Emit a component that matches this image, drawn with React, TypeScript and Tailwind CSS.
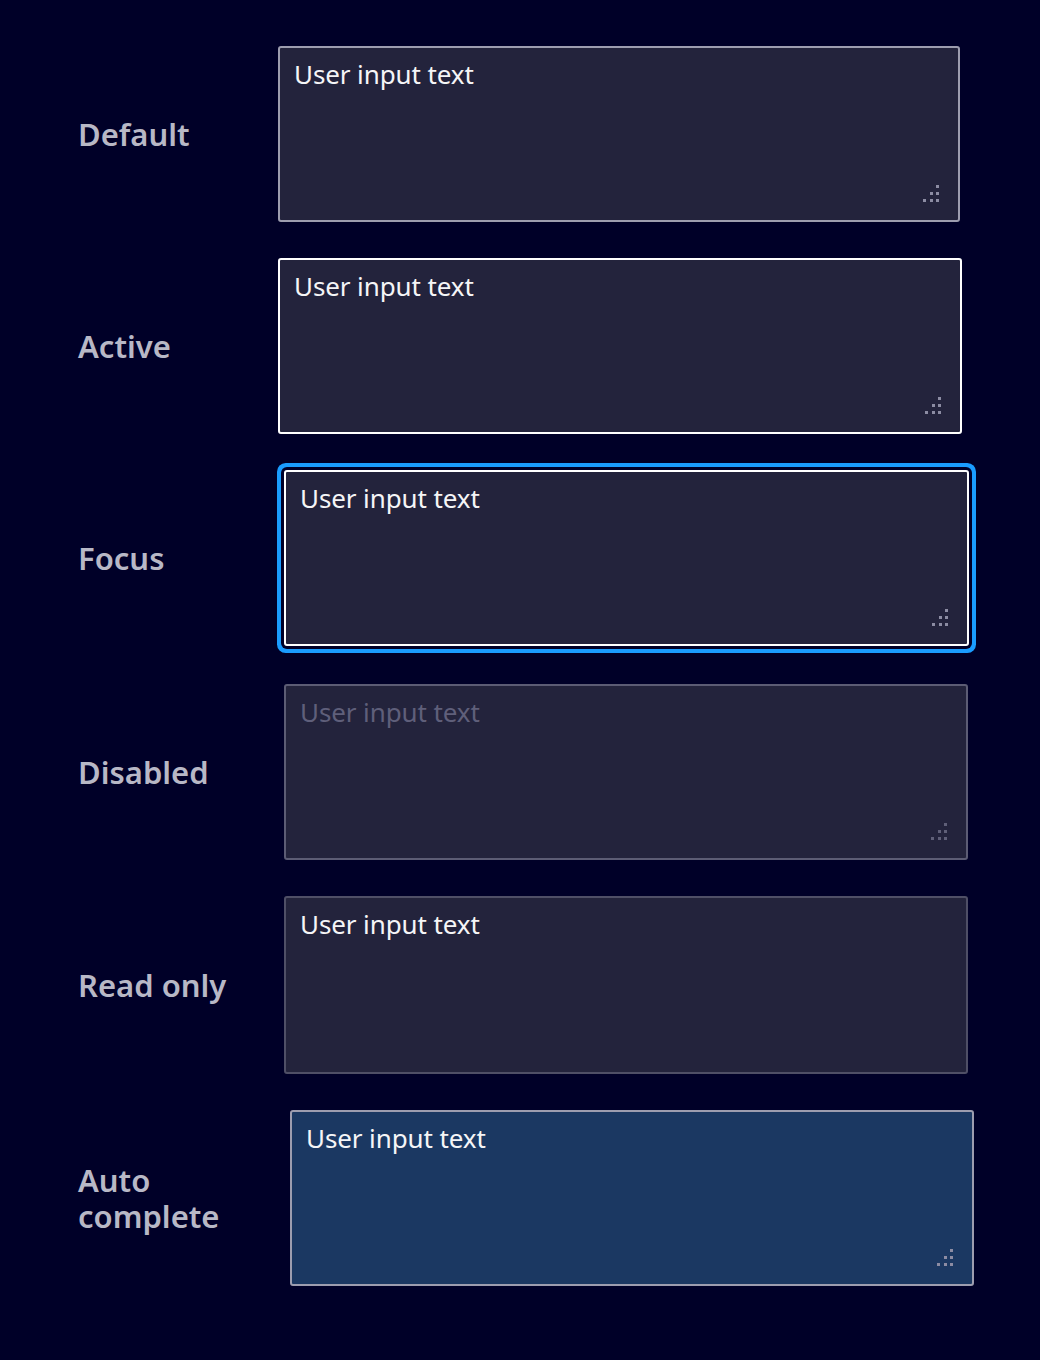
import React from 'react'

type Variant = 'default' | 'active' | 'focus' | 'disabled' | 'readonly' | 'autocomplete'

const rows: { label: string; variant: Variant; offset: string; top: string }[] = [
  { label: 'Default', variant: 'default', offset: 'ml-0', top: 'mt-0' },
  { label: 'Active', variant: 'active', offset: 'ml-0', top: 'mt-[36px]' },
  { label: 'Focus', variant: 'focus', offset: 'ml-[6px]', top: 'mt-[36px]' },
  { label: 'Disabled', variant: 'disabled', offset: 'ml-[6px]', top: 'mt-[38px]' },
  { label: 'Read only', variant: 'readonly', offset: 'ml-[6px]', top: 'mt-[36px]' },
  { label: 'Auto complete', variant: 'autocomplete', offset: 'ml-[12px]', top: 'mt-[36px]' },
]

const boxStyles: Record<Variant, string> = {
  default: 'w-[682px] h-[176px] bg-[#23233c] border-2 border-[#9d9daf] text-[#f5f5f7]',
  active: 'w-[684px] h-[176px] bg-[#23233c] border-2 border-white text-[#f5f5f7]',
  focus:
    'w-[685px] h-[176px] bg-[#23233c] border-2 border-white text-[#f5f5f7] shadow-[0_0_0_3px_#000028,0_0_0_7px_#1a9cff]',
  disabled: 'w-[684px] h-[176px] bg-[#23233c] border-2 border-[#5c5c74] text-[#5f5f7a]',
  readonly: 'w-[684px] h-[178px] bg-[#23233c] border-2 border-[#4f4f66] text-[#f5f5f7]',
  autocomplete: 'w-[684px] h-[176px] bg-[#1b3862] border-2 border-[#9d9daf] text-[#f5f5f7]',
}

function ResizeGrip({ dim }: { dim?: boolean }) {
  const fill = dim ? '#5f5f78' : '#8c8ca3'
  const dots = [
    [13, 0],
    [7, 7],
    [13, 7],
    [0, 14],
    [7, 14],
    [13, 14],
  ]
  return (
    <svg width="16" height="17" viewBox="0 0 16 17" className="absolute right-[19px] bottom-[18px]">
      {dots.map(([x, y], i) => (
        <rect key={i} x={x} y={y} width="3" height="3" fill={fill} />
      ))}
    </svg>
  )
}

function TextBox({ variant }: { variant: Variant }) {
  return (
    <div className={`relative rounded-[3px] ${boxStyles[variant]}`}>
      <div className="pl-[14px] pt-[9px] text-[26px] leading-[34px] tracking-[-0.1px]">User input text</div>
      {variant !== 'readonly' && <ResizeGrip dim={variant === 'disabled'} />}
    </div>
  )
}

export default function App() {
  return (
    <div
      className="min-h-[1360px] bg-[#000028] pt-[46px] pl-[79px]"
      style={{ fontFamily: '"Noto Sans", "Open Sans", sans-serif' }}
    >
      {rows.map(row => (
        <div key={row.label} className={`flex items-center ${row.top}`}>
          <div className="w-[199px] pr-[40px] text-[31px] leading-[36px] font-semibold text-[#b8b8c6] -translate-x-px">
            {row.label}
          </div>
          <div className={row.offset}>
            <TextBox variant={row.variant} />
          </div>
        </div>
      ))}
    </div>
  )
}
